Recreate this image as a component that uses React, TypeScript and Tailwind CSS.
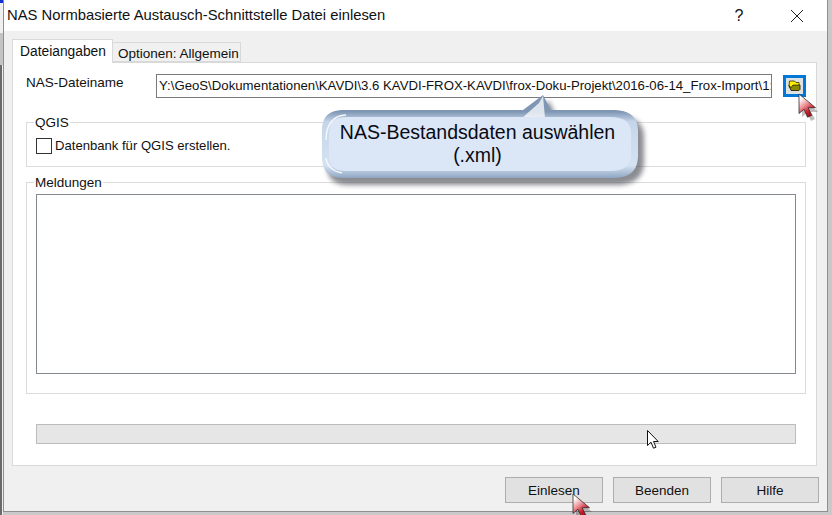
import React from 'react';

const FolderIcon = () => (
  <svg width="13" height="12" viewBox="0 0 13 12">
    <path d="M1.500 1h5l1.500 1.500h3V5H5L2.500 8.500 1 6z" fill="#ffef00" stroke="#2a2a00" strokeWidth="0.8" />
    <path d="M1 5.500 3 10.500 11 10.500 12 9.500V5H5L3 7.500z" fill="#8a8a00" stroke="#151500" strokeWidth="0.8" />
    <path d="M2.500 2h3.500l1.500 1.500h3V4.500H5L3 7z" fill="#fff200" />
  </svg>
);

const RedCursor = ({ className, id }: { className: string; id: string }) => (
  <svg className={className} width="24" height="30" viewBox="0 0 24 30">
    <defs>
      <linearGradient id={id} x1="0" y1="0" x2="0.55" y2="1">
        <stop offset="0.2" stopColor="#ffffff" />
        <stop offset="0.5" stopColor="#ee9aa0" />
        <stop offset="0.8" stopColor="#c9202c" />
        <stop offset="1" stopColor="#a80f1c" />
      </linearGradient>
    </defs>
    <path d="M4 4v20l5-4 4 8 4-2-4-7h7z" fill="#444" opacity="0.35" />
    <path d="M1 1v19.500l5-4.300 3.500 8 4.200-1.800-3.500-7.700h7.300z" fill={`url(#${id})`} stroke="#3a2a2a" strokeWidth="0.8" />
  </svg>
);

const PlainCursor = ({ className }: { className: string }) => (
  <svg className={className} width="13" height="20" viewBox="0 0 13 20">
    <path d="M.5.500v15l3.500-3.300 2.500 6 2.500-1-2.500-5.700h4.700z" fill="#fff" stroke="#111" />
  </svg>
);

const Callout = () => (
  <div className="absolute left-[310px] top-[90px] w-[345px] h-[100px]">
    <svg className="absolute inset-0" width="345" height="100" viewBox="0 0 345 100">
      <defs>
        <linearGradient id="bevel" x1="0" y1="0" x2="0" y2="1">
          <stop offset="0" stopColor="#7f97b4" />
          <stop offset="0.2" stopColor="#7f97b4" />
          <stop offset="0.32" stopColor="#c5d5e9" />
          <stop offset="0.85" stopColor="#d5e2f2" />
          <stop offset="1" stopColor="#8fa6c2" />
        </linearGradient>
        <filter id="softShadow" x="-5%" y="-10%" width="110%" height="130%">
          <feGaussianBlur stdDeviation="2.500" />
        </filter>
      </defs>
      <path
        d="M37 23H216L236 8 L243 23H302C322 23 331 30 331 44V68C331 84 322 92 302 92H37C18 92 14 84 14 68V44C14 30 18 23 37 23Z"
        fill="#3d4048"
        opacity="0.6"
        filter="url(#softShadow)"
        transform="translate(3 3)"
      />
      <path
        d="M35 20H213L233 5 L241 20H302C320 20 328 27 328 41V65C328 81 320 88 302 88H35C18 88 12 81 12 65V41C12 27 18 20 35 20Z"
        fill="url(#bevel)"
      />
      <path d="M212 28 229 13 233 6 235 28z" fill="#ffffff" opacity="0.75" />
      <path
        d="M36 27H300C314 27 321 32 321 44V63C321 76 314 81 300 81H36C24 81 19 76 19 63V44C19 32 24 27 36 27Z"
        fill="#dbe7f6"
      />
      <path d="M16 50C16 34 24 25 36 25" fill="none" stroke="#f4f8fc" strokeWidth="1.500" />
      <path d="M16 68C17 76 22 81 32 83" fill="none" stroke="#f4f8fc" strokeWidth="1.500" />
    </svg>
    <div className="absolute left-0 top-[31px] w-[335px] text-center font-['Liberation_Sans',Arial,sans-serif] text-[19.5px] leading-[23px] text-[#0a0a14] whitespace-nowrap">
      NAS-Bestandsdaten auswählen
      <br />
      (.xml)
    </div>
  </div>
);

const Group = ({ title, className, children }: { title: string; className: string; children: React.ReactNode }) => (
  <fieldset className={`w-[780px] ml-[13px] border border-[#dcdcdc] ${className}`}>
    <legend className="ml-[7px] px-[1px] leading-[15px]">{title}</legend>
    {children}
  </fieldset>
);

const FooterButton = ({ label }: { label: string }) => (
  <button className="w-[98px] h-[26px] pt-[1px] bg-[#e1e1e1] border border-[#adadad] text-[13.5px] leading-none text-[#111]">{label}</button>
);

export default function App() {
  return (
    <div className="relative flex w-[832px] h-[515px] overflow-hidden bg-[#c9c9c9] font-['Liberation_Sans',Arial,sans-serif] text-[13.5px] text-[#111]">
      {/* what is left of the window behind the dialog */}
      <div className="flex flex-col w-[3px] shrink-0">
        <div className="h-[3px] bg-[#1030d0]" />
        <div className="h-[30px] bg-[#f0f0f0]" />
        <div className="h-[32px] bg-[#c4c4c4]" />
        <div className="flex-1 bg-[#6a6a6a] border-r border-[#eeeeee]" />
      </div>

      <div className="flex flex-col w-[825px] h-[512px] bg-[#f0f0f0] border-l border-r border-b border-[#8f8f8f]">
        <div className="flex items-center h-[31px] shrink-0 bg-white pl-[3px]">
          <span className="flex-1 text-[14.8px]">NAS Normbasierte Austausch-Schnittstelle Datei einlesen</span>
          <span className="w-[14px] mr-[44px] text-[16px] text-center">?</span>
          <svg className="mr-[23px]" width="14" height="14" viewBox="0 0 14 14">
            <path d="M1 1l12 12M13 1L1 13" stroke="#222" strokeWidth="1" fill="none" />
          </svg>
        </div>

        <div className="flex items-end h-[31px] shrink-0 pl-[8px]">
          <div className="relative z-10 w-[101px] h-[24px] -mb-px bg-white border border-b-0 border-[#d9d9d9] pl-[7px] pt-[2px] text-[13.8px]">Dateiangaben</div>
          <div className="w-[128px] h-[20px] bg-[#f0f0f0] border border-l-0 border-[#d9d9d9] pl-[5px] pt-[1px]">Optionen: Allgemein</div>
        </div>

        <div className="flex flex-col w-[805px] h-[404px] ml-[8px] bg-white border border-[#d9d9d9]">
          <div className="flex items-center h-[24px] mt-[11px] pl-[13px] shrink-0">
            <span className="w-[130px] -mt-[6px]">NAS-Dateiname</span>
            <div className="w-[616px] h-[24px] border border-[#7a7a7a] pl-[2px] text-[13.2px] leading-[22px] overflow-hidden whitespace-nowrap">
              Y:\GeoS\Dokumentationen\KAVDI\3.6 KAVDI-FROX-KAVDI\frox-Doku-Projekt\2016-06-14_Frox-Import\1:
            </div>
            <button className="flex items-center justify-center w-[23px] h-[22px] ml-[11px] -mt-[1px] bg-[#e1e1e1] border-[3px] border-[#0078d7]">
              <FolderIcon />
            </button>
          </div>

          <Group title="QGIS" className="h-[52px] mt-[17px]">
            <label className="flex items-center ml-[9px] mt-[6px] text-[13.1px]">
              <span className="w-[16px] h-[16px] border border-[#333] bg-white mr-[3px]" />
              Datenbank für QGIS erstellen.
            </label>
          </Group>

          <Group title="Meldungen" className="h-[219px] mt-[8px]">
            <div className="w-[760px] h-[180px] ml-[9px] mt-[4px] bg-white border border-[#828790]" />
          </Group>

          <div className="w-[760px] h-[20px] ml-[23px] mt-[30px] bg-[#e6e6e6] border border-[#bcbcbc]" />
        </div>

        <div className="flex justify-end gap-[10px] mt-[11px] pr-[8px]">
          <FooterButton label="Einlesen" />
          <FooterButton label="Beenden" />
          <FooterButton label="Hilfe" />
        </div>
      </div>

      <Callout />
      <RedCursor id="redArrowBrowse" className="absolute left-[798px] top-[93px]" />
      <RedCursor id="redArrowRead" className="absolute left-[572px] top-[493px]" />
      <PlainCursor className="absolute left-[647px] top-[430px]" />
    </div>
  );
}
